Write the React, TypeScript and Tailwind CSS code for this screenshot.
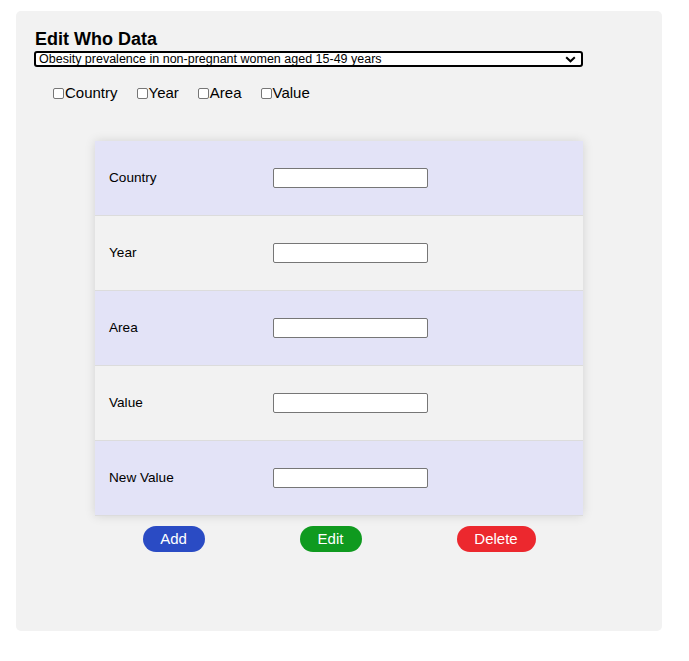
import React from "react";

const rows = ["Country", "Year", "Area", "Value", "New Value"];
const checks = ["Country", "Year", "Area", "Value"];

export default function App() {
  return (
    <div className="min-h-[661px] bg-white pt-[11px] pl-[16px]" style={{ fontFamily: '"Liberation Sans", Arial, sans-serif' }}>
      <div className="w-[646px] h-[620px] bg-[#f2f2f2] rounded-[5px] pt-[18px] pl-[18px]">
        <h1 className="text-[18px] leading-[21px] font-bold text-black pl-[1px]">Edit Who Data</h1>
        <div className="relative mt-[1px] w-[549px] h-[16px]">
          <select className="block appearance-none w-full h-[16px] border-2 border-black rounded-[3px] bg-white text-[12.5px] leading-[12px] pl-[3px] py-0 text-black outline-none">
            <option>Obesity prevalence in non-pregnant women aged 15-49 years</option>
          </select>
          <svg className="absolute right-[7px] top-[5px] pointer-events-none" width="11" height="7" viewBox="0 0 11 7">
            <path d="M1.2 1.2 L5.5 5.3 L9.8 1.2" fill="none" stroke="black" strokeWidth="2" />
          </svg>
        </div>
        <div className="flex items-center mt-[17px] pl-[19px] h-[18px] text-[15px] text-black">
          {checks.map((c, i) => (
            <label key={c} className={`flex items-center ${i > 0 ? "ml-[19px]" : ""}`}>
              <span className="inline-block w-[11px] h-[11px] border border-[#767676] rounded-[2px] bg-white mr-[1px]" />
              <span>{c}</span>
            </label>
          ))}
        </div>
        <div className="ml-[61px] mt-[39px] w-[488px] shadow-[0_0_10px_rgba(0,0,0,0.13)]">
          {rows.map((r, i) => (
            <div
              key={r}
              className={`flex items-center h-[75px] border-b border-[#dcdcdc] pl-[14px] ${i % 2 === 0 ? "bg-[#e3e3f7]" : "bg-[#f2f2f2]"}`}
            >
              <span className="w-[164px] text-[13.6px] text-black">{r}</span>
              <input type="text" className="w-[155px] h-[20px] bg-white border border-[#767676] rounded-[2px] outline-none" />
            </div>
          ))}
        </div>
        <div className="ml-[61px] w-[488px] mt-[10px] flex justify-around">
          <button className="w-[62px] h-[26px] rounded-full bg-[#2a4bc4] text-white text-[15px]">Add</button>
          <button className="w-[62px] h-[26px] rounded-full bg-[#0f9a1f] text-white text-[15px]">Edit</button>
          <button className="w-[79px] h-[26px] rounded-full bg-[#ec282e] text-white text-[15px]">Delete</button>
        </div>
      </div>
    </div>
  );
}
